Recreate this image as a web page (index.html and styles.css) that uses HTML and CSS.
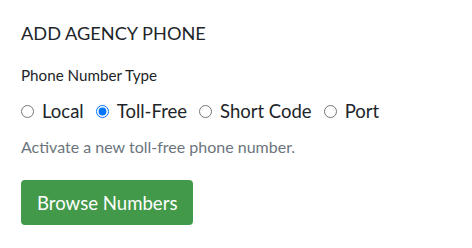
FILE: index.html
```html
<!DOCTYPE html>
<html lang="en">
<head>
    <meta charset="UTF-8">
    <meta name="viewport" content="width=device-width, initial-scale=1.0">
    <title>Add Agency Phone</title>
    <link rel="stylesheet" href="styles.css">
</head>
<body>
    <div class="panel">
        <h3 class="panel-title">ADD AGENCY PHONE</h3>
        <form id="phone-form">
            <div class="form-group">
                <label class="group-label">Phone Number Type</label>
                <div class="radio-row">
                    <label class="radio"><input type="radio" name="type" value="local"> Local</label>
                    <label class="radio"><input type="radio" name="type" value="toll-free" checked> Toll-Free</label>
                    <label class="radio"><input type="radio" name="type" value="short-code"> Short Code</label>
                    <label class="radio"><input type="radio" name="type" value="port"> Port</label>
                </div>
            </div>
            <p class="help">Activate a new toll-free phone number.</p>
            <button type="button" class="btn-green">Browse Numbers</button>
        </form>
    </div>
</body>
</html>
```

FILE: styles.css
```css
body {
    font-family: Lato, "Open Sans", sans-serif;
    margin: 0;
    background-color: #ffffff;
    color: #212529;
}
.panel {
    padding: 22px 21px;
}
.panel-title {
    font-size: 18.2px;
    font-weight: 400;
    margin: 0 0 21px 0;
    line-height: 22px;
}
.group-label {
    display: block;
    font-size: 15.2px;
    line-height: 20px;
    margin-bottom: 14px;
}
.radio-row {
    display: flex;
    gap: 12px;
    font-size: 18.5px;
    line-height: 24px;
}
.radio {
    display: flex;
    align-items: center;
    gap: 8px;
}
.radio input {
    margin: 0;
    width: 13px;
    height: 13px;
}
.help {
    color: #6c757d;
    font-size: 16px;
    margin: 14px 0 23px 0;
    line-height: 20px;
}
.btn-green {
    font-family: inherit;
    font-size: 18.6px;
    color: #ffffff;
    background-color: #43994a;
    border: none;
    border-radius: 4px;
    padding: 0 16px;
    height: 45px;
    cursor: pointer;
}
```
